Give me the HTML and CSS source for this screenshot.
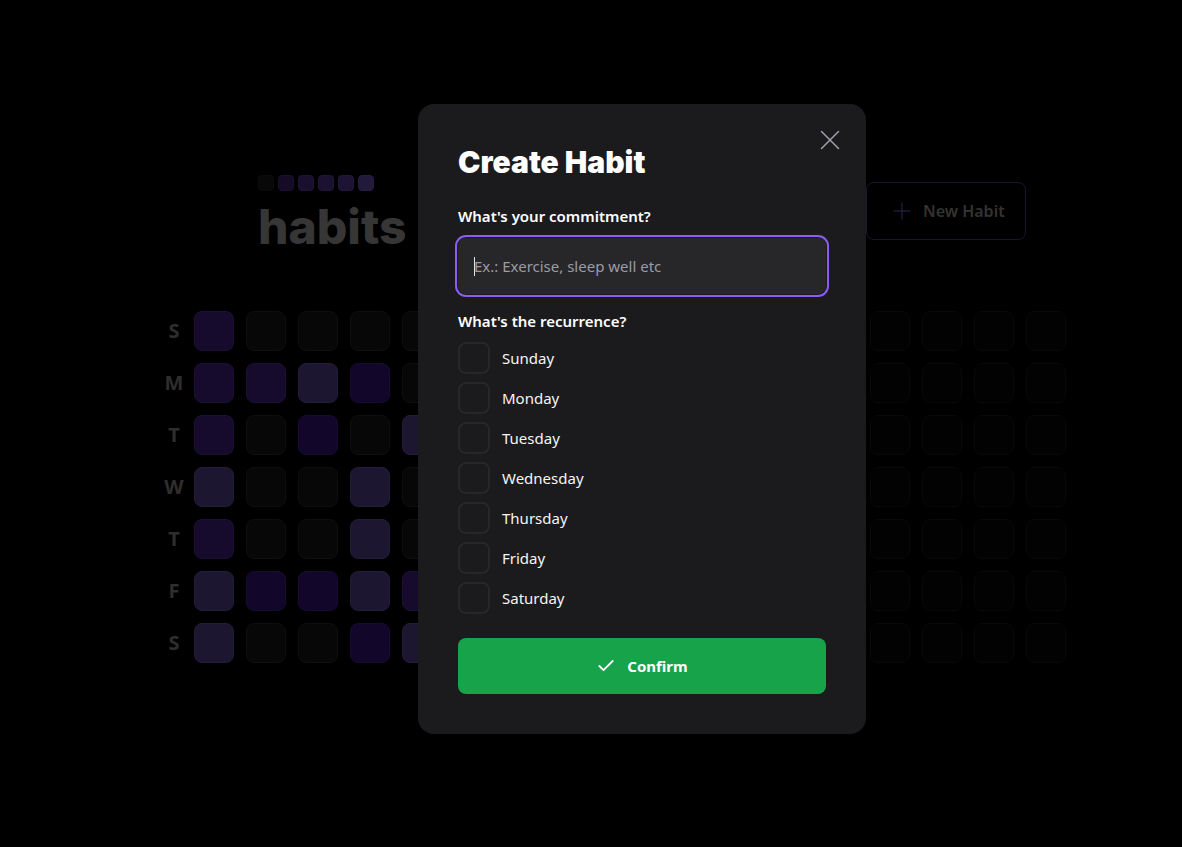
FILE: index.html
```html
<!DOCTYPE html>
<html lang="en">
<head>
<meta charset="utf-8">
<title>Habits</title>
<link rel="stylesheet" href="styles.css">
</head>
<body>
<div class="app">
  <header class="header">
    <div class="brand">
      <div class="logo">
        <span class="sq sq1"></span><span class="sq sq2"></span><span class="sq sq3"></span><span class="sq sq4"></span><span class="sq sq5"></span><span class="sq sq6"></span>
      </div>
      <div class="brand-name">habits</div>
    </div>
    <button class="new-habit" type="button">
      <svg width="24" height="24" viewBox="0 0 24 24" fill="none" stroke="currentColor" stroke-width="1.5" stroke-linecap="round"><path d="M12 4v16M4 12h16"/></svg>
      <span>New Habit</span>
    </button>
  </header>

  <section class="summary">
    <div class="weekdays">
      <div class="wd">S</div><div class="wd">M</div><div class="wd">T</div><div class="wd">W</div><div class="wd">T</div><div class="wd">F</div><div class="wd">S</div>
    </div>
    <div class="cells">
      <!-- col 1 -->
      <div class="cell a"></div><div class="cell a"></div><div class="cell a"></div><div class="cell b"></div><div class="cell a"></div><div class="cell b"></div><div class="cell b"></div>
      <!-- col 2 -->
      <div class="cell e"></div><div class="cell a"></div><div class="cell e"></div><div class="cell e"></div><div class="cell e"></div><div class="cell c"></div><div class="cell e"></div>
      <!-- col 3 -->
      <div class="cell e"></div><div class="cell b"></div><div class="cell c"></div><div class="cell e"></div><div class="cell e"></div><div class="cell c"></div><div class="cell e"></div>
      <!-- col 4 -->
      <div class="cell e"></div><div class="cell c"></div><div class="cell e"></div><div class="cell b"></div><div class="cell b"></div><div class="cell b"></div><div class="cell c"></div>
      <!-- col 5 -->
      <div class="cell e"></div><div class="cell e"></div><div class="cell b"></div><div class="cell e"></div><div class="cell e"></div><div class="cell a"></div><div class="cell b"></div>
      <!-- col 6-13 -->
      <div class="cell e"></div><div class="cell e"></div><div class="cell e"></div><div class="cell e"></div><div class="cell e"></div><div class="cell e"></div><div class="cell e"></div>
      <div class="cell e"></div><div class="cell e"></div><div class="cell e"></div><div class="cell e"></div><div class="cell e"></div><div class="cell e"></div><div class="cell e"></div>
      <div class="cell e"></div><div class="cell e"></div><div class="cell e"></div><div class="cell e"></div><div class="cell e"></div><div class="cell e"></div><div class="cell e"></div>
      <div class="cell e"></div><div class="cell e"></div><div class="cell e"></div><div class="cell e"></div><div class="cell e"></div><div class="cell e"></div><div class="cell e"></div>
      <div class="cell e"></div><div class="cell e"></div><div class="cell e"></div><div class="cell e"></div><div class="cell e"></div><div class="cell e"></div><div class="cell e"></div>
      <div class="cell e"></div><div class="cell e"></div><div class="cell e"></div><div class="cell e"></div><div class="cell e"></div><div class="cell e"></div><div class="cell e"></div>
      <div class="cell e"></div><div class="cell e"></div><div class="cell e"></div><div class="cell e"></div><div class="cell e"></div><div class="cell e"></div><div class="cell e"></div>
      <div class="cell e"></div><div class="cell e"></div><div class="cell e"></div><div class="cell e"></div><div class="cell e"></div><div class="cell e"></div><div class="cell e"></div>
      <!-- col 14-17 -->
      <div class="cell f"></div><div class="cell f"></div><div class="cell f"></div><div class="cell f"></div><div class="cell f"></div><div class="cell f"></div><div class="cell f"></div>
      <div class="cell f"></div><div class="cell f"></div><div class="cell f"></div><div class="cell f"></div><div class="cell f"></div><div class="cell f"></div><div class="cell f"></div>
      <div class="cell f"></div><div class="cell f"></div><div class="cell f"></div><div class="cell f"></div><div class="cell f"></div><div class="cell f"></div><div class="cell f"></div>
      <div class="cell f"></div><div class="cell f"></div><div class="cell f"></div><div class="cell f"></div><div class="cell f"></div><div class="cell f"></div><div class="cell f"></div>
    </div>
  </section>
</div>

<div class="overlay">
  <div class="modal">
    <button class="close" type="button" aria-label="Close">
      <svg width="20" height="20" viewBox="0 0 20 20" fill="none" stroke="currentColor" stroke-width="1.5" stroke-linecap="round"><path d="M1.5 1.5l17 17M18.5 1.5l-17 17"/></svg>
    </button>
    <h2 class="title">Create Habit</h2>
    <form class="form">
      <label class="label" for="commitment">What's your commitment?</label>
      <div class="input-wrap">
        <span class="caret"></span>
        <input id="commitment" class="input" type="text" placeholder="Ex.: Exercise, sleep well etc">
      </div>
      <div class="label label-rec">What's the recurrence?</div>
      <div class="days">
        <div class="day"><span class="box"></span><span>Sunday</span></div>
        <div class="day"><span class="box"></span><span>Monday</span></div>
        <div class="day"><span class="box"></span><span>Tuesday</span></div>
        <div class="day"><span class="box"></span><span>Wednesday</span></div>
        <div class="day"><span class="box"></span><span>Thursday</span></div>
        <div class="day"><span class="box"></span><span>Friday</span></div>
        <div class="day"><span class="box"></span><span>Saturday</span></div>
      </div>
      <button class="confirm" type="button">
        <svg width="20" height="20" viewBox="0 0 24 24" fill="none" stroke="currentColor" stroke-width="2.2" stroke-linecap="round" stroke-linejoin="round"><path d="M20 6L9 17l-5-5"/></svg>
        <span>Confirm</span>
      </button>
    </form>
  </div>
</div>
</body>
</html>
```

FILE: styles.css
```css
* { box-sizing: border-box; }

html, body {
  margin: 0;
  padding: 0;
  background: #000;
  height: 100%;
}

body {
  font-family: "Noto Sans", "Open Sans", sans-serif;
  color: #fff;
  overflow: hidden;
}

.app {
  padding-top: 175px;
}

.header {
  display: flex;
  justify-content: space-between;
  align-items: flex-start;
  width: 768px;
  margin-left: 258px;
}

.brand {
  display: flex;
  flex-direction: column;
}

.logo {
  display: flex;
  gap: 4px;
}

.sq {
  width: 16px;
  height: 16px;
  border-radius: 4px;
  border: 1px solid #111018;
}
.sq1 { background: #080808; border-color: #0c0c0c; }
.sq2 { background: #150b26; border-color: #1a1030; }
.sq3 { background: #190f2e; border-color: #1e1434; }
.sq4 { background: #1b1131; border-color: #201636; }
.sq5 { background: #1d1435; border-color: #22193a; }
.sq6 { background: #211a3b; border-color: #261f40; }

.brand-name {
  margin-top: 12px;
  font-family: Inter, "Noto Sans", sans-serif;
  font-weight: 800;
  font-size: 48px;
  line-height: 48px;
  color: #363636;
}

.new-habit {
  margin-top: 7px;
  display: flex;
  align-items: center;
  gap: 9px;
  height: 58px;
  width: 160px;
  padding: 0 0 0 23px;
  background: #000;
  border: 1px solid #1a1430;
  border-radius: 8px;
  color: #1f1838;
  font-family: "Noto Sans", sans-serif;
  font-weight: 600;
  font-size: 16px;
  white-space: nowrap;
}
.new-habit svg { flex: none; }
.new-habit span { color: #333; }

.summary {
  display: flex;
  margin-top: 60px;
  margin-left: 154px;
}

.weekdays {
  display: flex;
  flex-direction: column;
  gap: 12px;
  width: 40px;
}

.wd {
  height: 40px;
  line-height: 40px;
  text-align: center;
  font-weight: 700;
  font-size: 20px;
  color: #2e2e2e;
}

.cells {
  display: grid;
  grid-auto-flow: column;
  grid-template-rows: repeat(7, 40px);
  grid-auto-columns: 40px;
  gap: 12px;
}

.cell {
  width: 40px;
  height: 40px;
  border-radius: 8px;
  border: 1px solid #0e0e0e;
  background: #070707;
}
.cell.a { background: #170b2d; border-color: #1c1133; }
.cell.b { background: #1d1631; border-color: #231c37; }
.cell.c { background: #12072a; border-color: #170c2f; }
.cell.f { background: #020202; border-color: #080808; }

/* modal */
.overlay {
  position: fixed;
  inset: 0;
  padding: 104px 0 0 418px;
}

.modal {
  position: relative;
  width: 448px;
  background: #1b1b1e;
  border-radius: 16px;
  padding: 40px;
}

.close {
  position: absolute;
  top: 26px;
  right: 26px;
  padding: 0;
  background: none;
  border: 0;
  color: #a1a1aa;
  display: flex;
}

.title {
  margin: 0;
  font-family: Inter, "Noto Sans", sans-serif;
  font-weight: 900;
  font-size: 30px;
  line-height: 36px;
  color: #fff;
}

.form {
  display: flex;
  flex-direction: column;
  margin-top: 24px;
}

.label {
  font-weight: 600;
  font-size: 15px;
  line-height: 24px;
  color: #fff;
}

.input-wrap {
  position: relative;
  margin-top: 10px;
}

.input {
  display: block;
  width: 100%;
  height: 56px;
  padding: 0 16px;
  background: #27272a;
  border: 0;
  border-radius: 8px;
  box-shadow: 0 0 0 1px #1b1b1e, 0 0 0 3px #8b5cf6;
  color: #fff;
  font-family: "Noto Sans", sans-serif;
  font-size: 15px;
  outline: none;
}
.input::placeholder { color: #9b9ba3; }

.caret {
  position: absolute;
  left: 16px;
  top: 19px;
  width: 1px;
  height: 19px;
  background: #e4e4e7;
}

.label-rec {
  margin-top: 15px;
}

.days {
  display: flex;
  flex-direction: column;
  gap: 8px;
  margin-top: 9px;
}

.day {
  display: flex;
  align-items: center;
  gap: 12px;
  font-size: 15px;
  line-height: 24px;
  color: #f4f4f5;
}

.box {
  width: 32px;
  height: 32px;
  border: 2px solid #27272a;
  border-radius: 8px;
}

.confirm {
  margin-top: 24px;
  height: 56px;
  display: flex;
  align-items: center;
  justify-content: center;
  gap: 11px;
  background: #16a34a;
  border: 0;
  border-radius: 8px;
  color: #fff;
  font-family: "Noto Sans", sans-serif;
  font-weight: 700;
  font-size: 15px;
}
```
